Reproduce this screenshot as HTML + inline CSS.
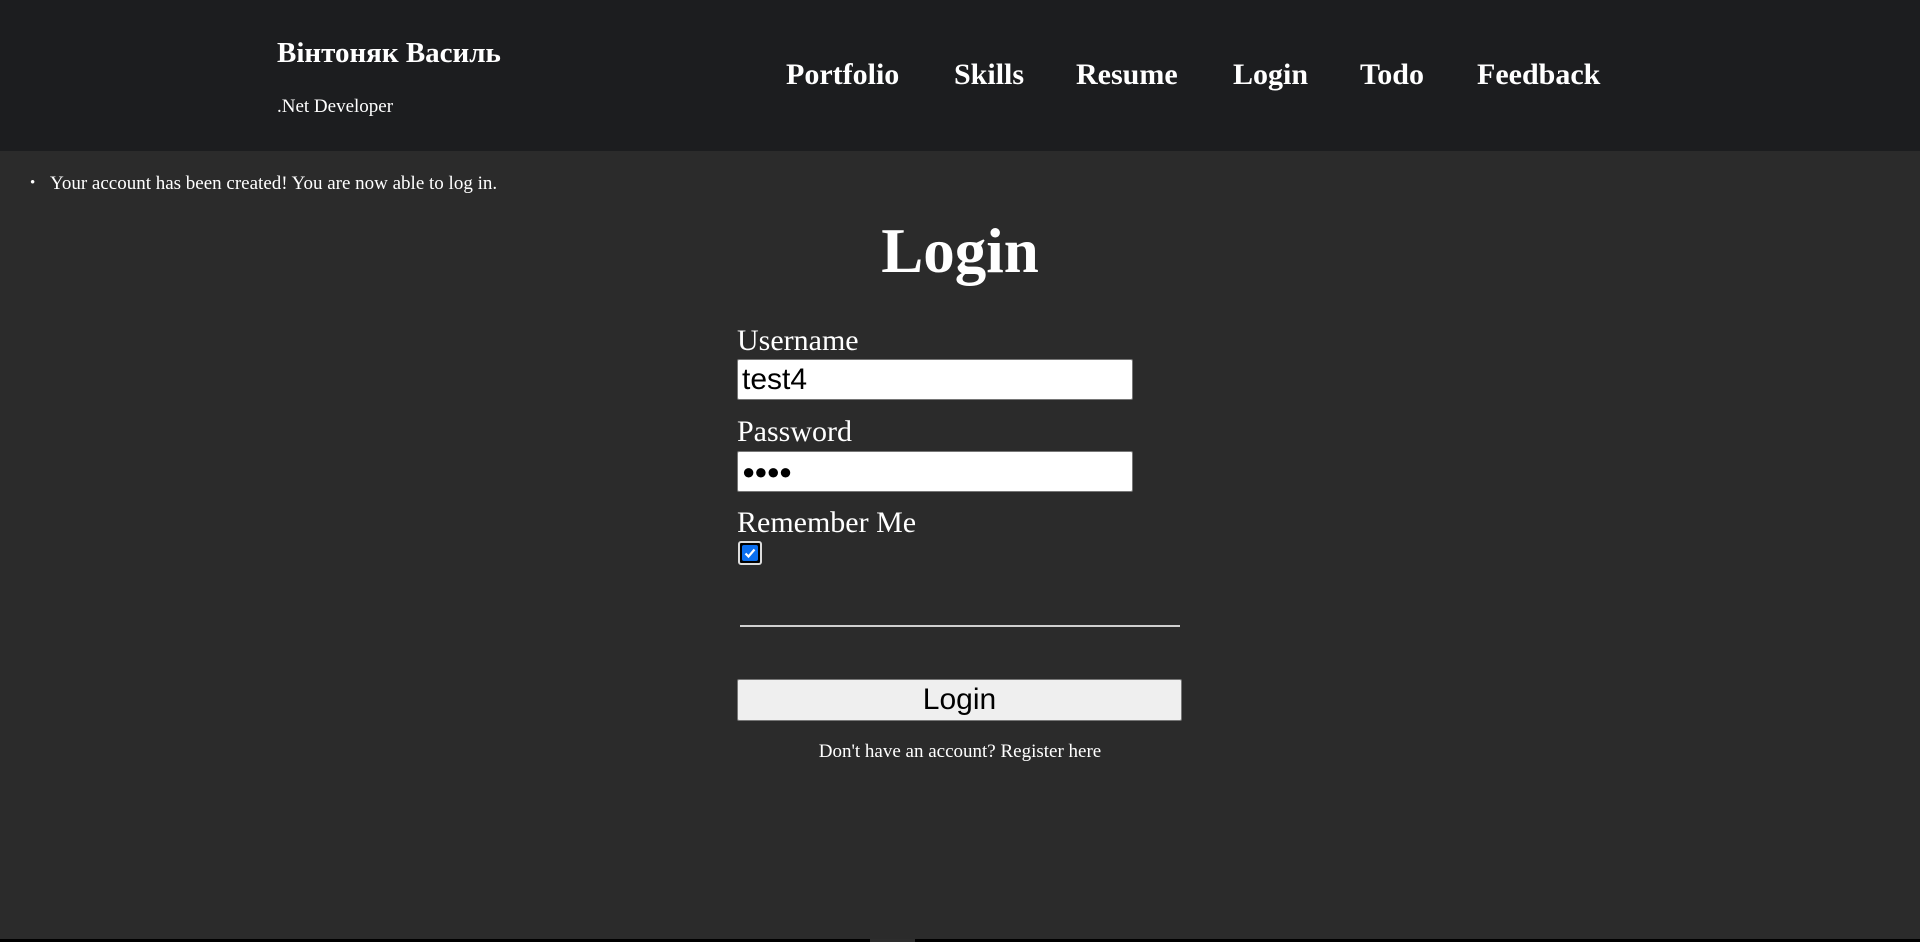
<!DOCTYPE html>
<html><head><meta charset="utf-8"><style>
html,body{margin:0;padding:0;width:1920px;height:942px;overflow:hidden;background:#2b2b2b;font-family:"Liberation Serif",serif;color:#fff}
.a{position:absolute;white-space:nowrap;line-height:1}
header{position:absolute;left:0;top:0;width:1920px;height:151px;background:#1c1d1f}
.nav{font-weight:bold;font-size:30px;top:60px}
.inp{position:absolute;left:737px;width:396px;height:41px;box-sizing:border-box;overflow:hidden;background:#fff;border:1px solid #767676;border-radius:2px;color:#000;font-family:"Liberation Sans",sans-serif;font-size:30px;line-height:39px;padding-left:4px}
.lbl{font-size:30px}
</style></head><body>
<header>
<div class="a" style="left:277px;top:39px;font-size:29px;font-weight:bold">Вінтоняк Василь</div>
<div class="a" style="left:277px;top:97px;font-size:19px">.Net Developer</div>
<div class="a nav" style="left:786px">Portfolio</div>
<div class="a nav" style="left:954px">Skills</div>
<div class="a nav" style="left:1076px">Resume</div>
<div class="a nav" style="left:1233px">Login</div>
<div class="a nav" style="left:1360px">Todo</div>
<div class="a nav" style="left:1477px">Feedback</div>
</header>
<div class="a" style="left:30px;top:176px;font-size:15px">•</div>
<div class="a" style="left:50px;top:174px;font-size:19px">Your account has been created! You are now able to log in.</div>
<div class="a" style="left:0;width:1920px;text-align:center;top:220px;font-size:63px;font-weight:bold">Login</div>
<div class="a lbl" style="left:737px;top:326px">Username</div>
<div class="inp" style="top:359px">test4</div>
<div class="a lbl" style="left:737px;top:417px">Password</div>
<div class="inp" style="top:451px;font-size:22px;letter-spacing:-1px">●●●●</div>
<div class="a lbl" style="left:737px;top:508px">Remember Me</div>
<div style="position:absolute;left:738px;top:541px;width:20px;height:20px;border:2px solid #ddd;border-radius:3px;background:#000"></div>
<div style="position:absolute;left:742px;top:545px;width:16px;height:16px;background:#0b6ff0;border-radius:2px"></div>
<svg style="position:absolute;left:742px;top:545px" width="16" height="16"><path d="M3.5 8.5 L6.5 11.5 L12.5 4.5" stroke="#fff" stroke-width="2.2" fill="none"/></svg>
<div style="position:absolute;left:740px;top:625px;width:440px;height:2px;background:#d0d0d0"></div>
<div style="position:absolute;left:737px;top:679px;width:443px;height:40px;background:#efefef;border:1px solid #767676;border-radius:2px;color:#000;font-family:'Liberation Sans',sans-serif;font-size:30px;line-height:40px;text-align:center">Login</div>
<div class="a" style="left:0;width:1920px;text-align:center;top:742px;font-size:19px">Don't have an account? Register here</div>
<div style="position:absolute;left:0;top:939px;width:1920px;height:3px;background:#000"></div>
<div style="position:absolute;left:870px;top:939px;width:45px;height:3px;background:#2d2d2d"></div>
</body></html>
